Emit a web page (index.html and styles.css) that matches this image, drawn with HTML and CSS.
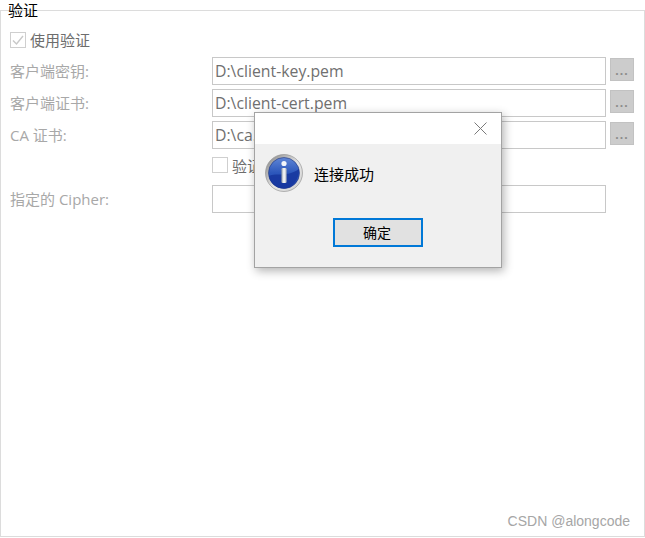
FILE: index.html
```html
<!DOCTYPE html>
<html lang="zh-CN">
<head>
<meta charset="utf-8">
<title>验证</title>
<link rel="stylesheet" href="styles.css">
</head>
<body>
<main class="group">
  <div class="legend">验证</div>
  <label class="use-row"><span class="check checked"><svg width="14" height="14" viewBox="0 0 14 14"><path d="M2 7.5 L5.5 11 L12 3" fill="none" stroke="#c8c8c8" stroke-width="1.4"/></svg></span><span>使用验证</span></label>
  <div class="form">
    <span class="label">客户端密钥:</span><div class="input">D:\client-key.pem</div><div class="browse">...</div>
    <span class="label">客户端证书:</span><div class="input">D:\client-cert.pem</div><div class="browse">...</div>
    <span class="label">CA 证书:</span><div class="input">D:\ca.pem</div><div class="browse">...</div>
    <span></span><label class="verify"><span class="check"></span><span>验证服务器</span></label><span></span>
    <span class="label">指定的 Cipher:</span><div class="input"></div><span></span>
  </div>
  <div class="mark">CSDN @alongcode</div>
</main>
<section class="dialog">
  <header class="dialog-title">
    <svg class="close" width="13" height="13" viewBox="0 0 13 13"><path d="M.5 .5 L12.5 12.5 M12.5 .5 L.5 12.5" stroke="#7a7a7a" stroke-width="1" fill="none"/></svg>
  </header>
  <div class="dialog-body">
    <div class="message">
      <svg class="info" width="38" height="38" viewBox="0 0 38 38">
        <defs>
          <linearGradient id="ring" x1="0" y1="0" x2="1" y2="1"><stop offset="0" stop-color="#7f7f7f"/><stop offset=".55" stop-color="#e6e6e6"/><stop offset="1" stop-color="#cfcfcf"/></linearGradient>
          <linearGradient id="disc" x1="0" y1="0" x2="0" y2="1"><stop offset="0" stop-color="#5f86d6"/><stop offset=".5" stop-color="#2c57bb"/><stop offset="1" stop-color="#2246b8"/></linearGradient>
          <linearGradient id="bar" x1="0" y1="0" x2="1" y2="0"><stop offset="0" stop-color="#8f9aa8"/><stop offset=".5" stop-color="#ffffff"/><stop offset="1" stop-color="#a8b0bc"/></linearGradient>
        </defs>
        <circle cx="19" cy="19" r="18.5" fill="url(#ring)" stroke="#8a8a8a" stroke-width=".6"/>
        <circle cx="19" cy="19" r="15.5" fill="url(#disc)" stroke="#24367a" stroke-width=".6"/>
        <path d="M3.8 22 C10 18 22 24 34 15 C34.6 24 28 34.5 19 34.5 C11 34.5 5 29 3.8 22 Z" fill="#14339a" opacity=".75"/>
        <circle cx="19" cy="9.5" r="2.6" fill="#f4f6fa"/>
        <rect x="16.4" y="14" width="5.2" height="15" rx="1.2" fill="url(#bar)"/>
      </svg>
      <span class="message-text">连接成功</span>
    </div>
    <div class="actions"><button class="ok" type="button">确定</button></div>
  </div>
</section>
</body>
</html>
```

FILE: styles.css
```css
* { box-sizing: border-box; }
html, body { margin: 0; padding: 0; }
body {
  width: 645px;
  height: 538px;
  background: #fff;
  overflow: hidden;
  position: relative;
  font-family: "Noto Sans CJK SC", "Open Sans", sans-serif;
  font-size: 15px;
}
.group {
  position: relative;
  margin-top: 10px;
  width: 645px;
  height: 527px;
  border: 1px solid #dcdcdc;
  padding: 21px 9px 0;
}
.legend {
  position: absolute;
  left: 7px;
  top: -10px;
  height: 18px;
  line-height: 18px;
  color: #000;
  background: linear-gradient(#fff 50%, transparent 50%);
}
.use-row {
  display: flex;
  align-items: center;
  gap: 4px;
  height: 16px;
  color: #6d6d6d;
  line-height: 16px;
}
.check {
  width: 16px;
  height: 16px;
  flex: none;
  border: 1px solid #cfcfcf;
  background: #fff;
  display: flex;
  align-items: center;
  justify-content: center;
}
.form {
  margin-top: 9px;
  display: grid;
  grid-template-columns: 202px 394px 28px;
  grid-auto-rows: 28px;
  row-gap: 4px;
  align-items: center;
}
.label {
  color: #a8a8a8;
  font-family: "Open Sans", "Noto Sans CJK SC", sans-serif;
  line-height: 28px;
  white-space: nowrap;
}
.input {
  height: 28px;
  border: 1px solid #c8c8c8;
  padding-left: 2px;
  color: #707070;
  font-family: "Open Sans", "Noto Sans CJK SC", sans-serif;
  font-size: 15.8px;
  line-height: 26px;
  white-space: nowrap;
  background: #fff;
}
.browse {
  justify-self: end;
  align-self: start;
  margin-top: 1px;
  width: 24px;
  height: 23px;
  background: #cccccc;
  border: 1px solid #c2c2c2;
  color: #8a8a8a;
  font-family: "Open Sans", sans-serif;
  font-size: 12px;
  font-weight: 700;
  line-height: 23px;
  text-align: center;
  letter-spacing: 1px;
}
.verify {
  display: flex;
  align-items: center;
  gap: 4px;
  align-self: start;
  margin-top: 4px;
  height: 16px;
  color: #6d6d6d;
  white-space: nowrap;
}
.mark {
  position: absolute;
  right: 14px;
  bottom: 7px;
  color: #a6a6a6;
  font-family: "Liberation Sans", sans-serif;
  font-size: 14px;
}
.dialog {
  position: absolute;
  left: 254px;
  top: 112px;
  width: 248px;
  height: 156px;
  border: 1px solid #a3a3a3;
  box-shadow: 2px 3px 9px rgba(0, 0, 0, .3);
  background: #f0f0f0;
  display: flex;
  flex-direction: column;
}
.dialog-title {
  height: 31px;
  background: #fff;
  flex: none;
  display: flex;
  justify-content: flex-end;
  align-items: center;
  padding-right: 14px;
}
.dialog-body {
  flex: 1;
  display: flex;
  flex-direction: column;
}
.message {
  display: flex;
  align-items: center;
  gap: 11px;
  padding: 10px 0 0 10px;
  color: #000;
}
.message-text { line-height: 36px; padding-top: 2px; }
.actions {
  display: flex;
  justify-content: center;
  margin-top: 26px;
}
.ok {
  width: 90px;
  height: 29px;
  background: #e1e1e1;
  border: 2px solid #0078d7;
  border-radius: 0;
  padding: 0 2px 0 0;
  color: #000;
  font-family: "Noto Sans CJK SC", sans-serif;
  font-size: 14px;
  line-height: 25px;
}
```
